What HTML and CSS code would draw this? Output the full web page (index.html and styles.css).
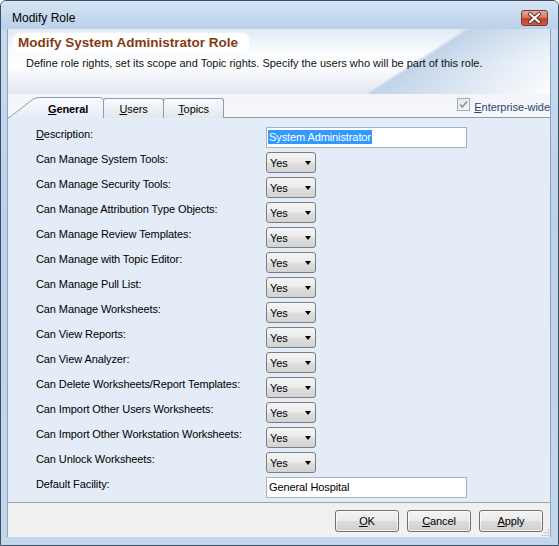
FILE: index.html
```html
<!DOCTYPE html>
<html>
<head>
<meta charset="utf-8">
<link rel="stylesheet" href="styles.css">
</head>
<body>
<div class="window">
  <div class="titlebar">
    <span class="title">Modify Role</span>
    <span class="close">
      <svg width="27" height="16" viewBox="0 0 27 16">
        <path d="M9 4 L18 12 M18 4 L9 12" stroke="#5a2a24" stroke-width="4" stroke-linecap="round"/>
        <path d="M9 4 L18 12 M18 4 L9 12" stroke="#ffffff" stroke-width="2.2" stroke-linecap="round"/>
      </svg>
    </span>
  </div>
  <div class="client">
    <div class="header">
      <div class="heading">Modify System Administrator Role</div>
      <div class="subtext">Define role rights, set its scope and Topic rights. Specify the users who will be part of this role.</div>
    </div>
    <div class="tabbar">
      <div class="tabs">
        <div class="tab tab-active">
          <svg class="tab-shape" width="96" height="24" viewBox="0 0 96 24">
            <defs>
              <linearGradient id="tg" x1="0" y1="0" x2="0" y2="1">
                <stop offset="0" stop-color="#fcfdff"/>
                <stop offset="1" stop-color="#e4ecf7"/>
              </linearGradient>
            </defs>
            <path d="M0.5 24 L26 4.6 Q29 3.5 33 3.5 L92 3.5 Q95.5 3.5 95.5 6.5 L95.5 24" fill="url(#tg)" stroke="#8b9cb2" stroke-width="1"/>
          </svg>
          <span class="tab-label"><u>G</u>eneral</span>
        </div>
        <div class="tab tab-plain"><span class="tab-label"><u>U</u>sers</span></div>
        <div class="tab tab-plain"><span class="tab-label"><u>T</u>opics</span></div>
      </div>
      <div class="enterprise">
        <span class="checkbox">
          <svg width="11" height="11" viewBox="0 0 11 11"><path d="M2 5.5 L4.3 8 L9 2.5" fill="none" stroke="#8d9298" stroke-width="1.8"/></svg>
        </span>
        <span class="ent-label"><u>E</u>nterprise-wide</span>
      </div>
    </div>
    <div class="panel">
      <div class="row"><span class="label"><u>D</u>escription:</span><span class="textbox"><span class="selected">System Administrator</span></span></div>
      <div class="row"><span class="label">Can Manage System Tools:</span><span class="combo">Yes<i class="arrow"></i></span></div>
      <div class="row"><span class="label">Can Manage Security Tools:</span><span class="combo">Yes<i class="arrow"></i></span></div>
      <div class="row"><span class="label">Can Manage Attribution Type Objects:</span><span class="combo">Yes<i class="arrow"></i></span></div>
      <div class="row"><span class="label">Can Manage Review Templates:</span><span class="combo">Yes<i class="arrow"></i></span></div>
      <div class="row"><span class="label">Can Manage with Topic Editor:</span><span class="combo">Yes<i class="arrow"></i></span></div>
      <div class="row"><span class="label">Can Manage Pull List:</span><span class="combo">Yes<i class="arrow"></i></span></div>
      <div class="row"><span class="label">Can Manage Worksheets:</span><span class="combo">Yes<i class="arrow"></i></span></div>
      <div class="row"><span class="label">Can View Reports:</span><span class="combo">Yes<i class="arrow"></i></span></div>
      <div class="row"><span class="label">Can View Analyzer:</span><span class="combo">Yes<i class="arrow"></i></span></div>
      <div class="row"><span class="label">Can Delete Worksheets/Report Templates:</span><span class="combo">Yes<i class="arrow"></i></span></div>
      <div class="row"><span class="label">Can Import Other Users Worksheets:</span><span class="combo">Yes<i class="arrow"></i></span></div>
      <div class="row"><span class="label">Can Import Other Workstation Worksheets:</span><span class="combo">Yes<i class="arrow"></i></span></div>
      <div class="row"><span class="label">Can Unlock Worksheets:</span><span class="combo">Yes<i class="arrow"></i></span></div>
      <div class="row"><span class="label">Default Facility:</span><span class="textbox">General Hospital</span></div>
    </div>
    <div class="footer">
      <span class="btn"><u>O</u>K</span>
      <span class="btn"><u>C</u>ancel</span>
      <span class="btn"><u>A</u>pply</span>
      <span class="grip"></span>
    </div>
  </div>
</div>
</body>
</html>
```
FILE: styles.css
```css
* { box-sizing: border-box; }
html, body { margin: 0; padding: 0; }
body {
  width: 559px;
  height: 546px;
  overflow: hidden;
  font-family: "Liberation Sans", Arial, sans-serif;
  font-size: 11px;
  letter-spacing: -0.1px;
  color: #000;
  background: #ffffff;
}
u { text-decoration: underline; text-underline-offset: 1px; }

.window {
  width: 559px;
  height: 546px;
  border: 1px solid #3d4f63;
  border-radius: 6px 6px 0 0;
  background: linear-gradient(to bottom, #c9dcf0 0%, #bcd2ea 40%, #c3d7ec 100%);
  display: flex;
  flex-direction: column;
  overflow: hidden;
}

.titlebar {
  height: 28px;
  flex: none;
  display: flex;
  align-items: flex-start;
  justify-content: space-between;
  padding-left: 11px;
  padding-right: 10px;
  background: linear-gradient(to bottom, #d6e5f5 0%, #c6daef 50%, #bbd1e9 100%);
}
.title {
  font-size: 12px;
  line-height: 14px;
  margin-top: 10px;
  letter-spacing: 0;
  color: #000;
}
.close {
  margin-top: 9px;
  width: 27px;
  height: 16px;
  border: 1px solid #7a3a32;
  border-radius: 3px;
  background: linear-gradient(to bottom, #e6a99c 0%, #d97a68 45%, #c2402e 55%, #cf5a45 100%);
  display: flex;
  align-items: center;
  justify-content: center;
}
.close svg { display: block; margin: -1px; }

.client {
  flex: none;
  height: 508px;
  margin: 0 7px 0 6px;
  border-left: 1px solid #8ea3bd;
  border-right: 1px solid #8ea3bd;
  display: flex;
  flex-direction: column;
  background: #f0f0f0;
}

.header {
  height: 65px;
  flex: none;
  padding: 4px 0 0 5px;
  background:
    linear-gradient(147deg, rgba(255,255,255,0) 71%, rgba(192,210,232,0.95) 72%, rgba(222,232,244,0.7) 87%, rgba(255,255,255,0.9) 100%),
    linear-gradient(to bottom, #dfe9f5 0%, #f7fafd 30%, #ffffff 55%, #eef2f7 80%, #e2e8f0 100%);
}
.heading {
  display: inline-block;
  height: 20px;
  padding: 0 11px 0 5px;
  border-radius: 8px;
  background: #ffffff;
  box-shadow: 0 0 3px rgba(255,255,255,0.9);
  font-size: 13.5px;
  font-weight: bold;
  line-height: 20px;
  letter-spacing: 0;
  color: #843b14;
}
.subtext {
  margin: 3px 0 0 13px;
  line-height: 14px;
  letter-spacing: 0;
  color: #111;
}

.tabbar {
  height: 23px;
  flex: none;
  display: flex;
  justify-content: space-between;
  align-items: flex-start;
  background: linear-gradient(to bottom, #f3f5f8 0%, #f7f8fa 100%);
}
.tabs {
  display: flex;
  align-items: flex-start;
}
.tab {
  position: relative;
  height: 24px;
}
.tab-active {
  width: 96px;
  z-index: 2;
  padding: 8px 0 0 40px;
}
.tab-active .tab-label { font-weight: bold; position: relative; }
.tab-shape { position: absolute; left: 0; top: 0; }
.tab-plain {
  width: 61px;
  height: 20px;
  margin-top: 4px;
  margin-left: -1px;
  border: 1px solid #8b9cb2;
  border-bottom: none;
  border-radius: 3px 3px 0 0;
  background: linear-gradient(to bottom, #fbfbfc 0%, #eef0f3 50%, #e3e7ec 100%);
  text-align: center;
  padding-top: 3px;
}
.tab-label { line-height: 14px; display: inline-block; }

.enterprise {
  display: flex;
  align-items: flex-start;
  margin-top: 4px;
  margin-right: 0;
}
.checkbox {
  width: 13px;
  height: 13px;
  border: 1px solid #a5acb5;
  background: linear-gradient(135deg, #e4e6e9 0%, #f6f7f8 100%);
  display: flex;
  align-items: center;
  justify-content: center;
  margin-right: 4px;
}
.ent-label {
  line-height: 14px;
  padding-top: 2px;
  color: #2a4270;
  font-size: 11px;
  letter-spacing: -0.05px;
  white-space: nowrap;
}

.panel {
  height: 386px;
  flex: none;
  border-top: 1px solid #8b9cb2;
  border-bottom: 1px solid #9aa4b0;
  background: #e4ecf7;
  padding-top: 7px;
}
.row {
  height: 25px;
  display: grid;
  grid-template-columns: 258px auto;
  align-items: center;
  justify-items: start;
}
.label {
  padding-left: 28px;
  line-height: 14px;
  margin-bottom: 8px;
  white-space: nowrap;
}
.textbox {
  width: 201px;
  height: 21px;
  border: 1px solid #a4b4c8;
  background: #ffffff;
  padding: 2px 0 0 2px;
  line-height: 15px;
  white-space: nowrap;
}
.selected {
  display: inline-block;
  margin-left: -1px;
  padding: 0 1px 0 1px;
  height: 14px;
  line-height: 14px;
  margin-top: 0;
  background: #3399ff;
  color: #ffffff;
}
.combo {
  width: 50px;
  height: 21px;
  border: 1px solid #7d7d7d;
  border-radius: 3px;
  background: linear-gradient(to bottom, #f5f5f5 0%, #ececec 45%, #dedede 55%, #d3d3d3 100%);
  display: flex;
  align-items: center;
  justify-content: space-between;
  padding: 2px 4px 0 3px;
  line-height: 15px;
}
.arrow {
  width: 0;
  height: 0;
  border-left: 3.5px solid transparent;
  border-right: 3.5px solid transparent;
  border-top: 4px solid #000;
  margin-top: -1px;
}

.footer {
  position: relative;
  height: 34px;
  flex: none;
  background: #f0f0f0;
  display: flex;
  justify-content: flex-end;
  align-items: flex-start;
  gap: 8px;
  padding: 7px 7px 0 0;
}
.btn {
  width: 64px;
  height: 22px;
  border: 1px solid #707070;
  border-radius: 3px;
  background: linear-gradient(to bottom, #f3f3f3 0%, #ebebeb 48%, #dddddd 52%, #cfcfcf 100%);
  box-shadow: inset 0 0 0 1px rgba(255,255,255,0.7);
  text-align: center;
  line-height: 20px;
  color: #000;
}
.grip {
  position: absolute;
  right: 1px;
  bottom: 1px;
  width: 8px;
  height: 8px;
  background-image: radial-gradient(circle, #b8bcc2 0.9px, transparent 1.1px);
  background-size: 3px 3px;
  clip-path: polygon(100% 0, 100% 100%, 0 100%);
}
```
